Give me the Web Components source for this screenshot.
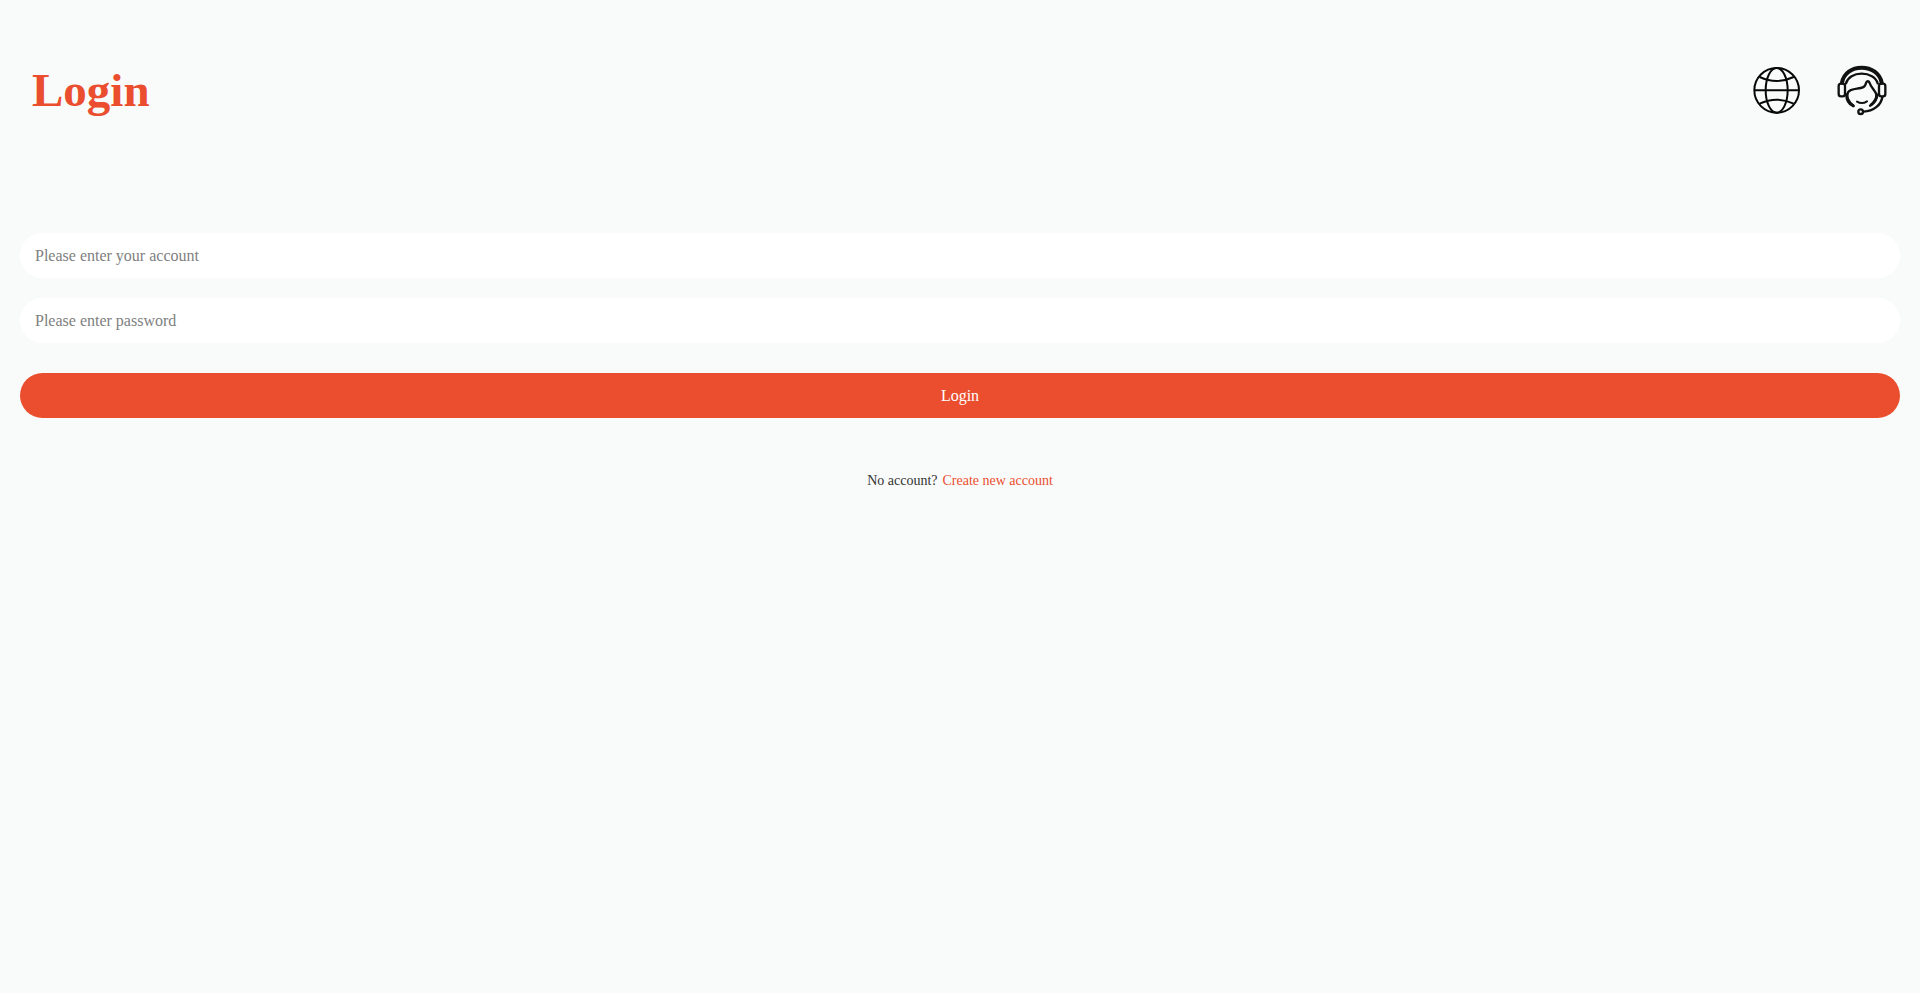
<!DOCTYPE html>
<html lang="en">
<head>
<meta charset="utf-8">
<meta name="viewport" content="width=device-width, initial-scale=1">
<title>Login</title>
<style>
  body { margin: 0; min-height: 100vh; background: #f9fbfa; font-family: "Liberation Serif", "Times New Roman", serif; color: #333; }
</style>
</head>
<body>
<login-page></login-page>
<script>
const define = (name, html) => {
  const template = document.createElement('template');
  template.innerHTML = html;
  customElements.define(name, class extends HTMLElement {
    constructor() {
      super();
      this.attachShadow({ mode: 'open' }).append(template.content.cloneNode(true));
    }
    connectedCallback() {
      const input = this.shadowRoot.querySelector('input');
      if (input) {
        input.type = this.getAttribute('type') || 'text';
        input.placeholder = this.getAttribute('label');
        input.setAttribute('aria-label', this.getAttribute('label'));
      }
      const button = this.shadowRoot.querySelector('button.icon');
      if (button) button.setAttribute('aria-label', this.getAttribute('label'));
    }
  });
};

define('icon-button', `
  <style>
    :host { display: block; }
    button { display: block; padding: 0; border: 0; background: none; cursor: pointer; }
  </style>
  <button class="icon" type="button"><slot></slot></button>`);

define('globe-icon', `
  <style>:host, svg { display: block; } svg { width: 48px; height: 48px; }</style>
  <svg viewBox="0 0 144 144" fill="none" stroke="#080808" stroke-width="6" aria-hidden="true">
    <circle cx="71" cy="73" r="67"/>
    <ellipse cx="71" cy="73" rx="33" ry="67"/>
    <path d="M4 73H138M20 33Q71 57 122 33M20 113Q71 89 122 113"/>
  </svg>`);

define('support-icon', `
  <style>:host, svg { display: block; } svg { width: 52px; height: 52px; }</style>
  <svg viewBox="27 27 156 156" fill="none" stroke="#111" stroke-width="7" stroke-linecap="round" stroke-linejoin="round" aria-hidden="true">
    <path d="M48 83C53 54 78 38 107 38S162 54 167 83" stroke-width="12"/>
    <path d="M60 85C65 67 84 56 107 56S150 67 155 85"/>
    <rect x="38" y="86" width="19" height="38" rx="7"/>
    <rect x="159" y="86" width="19" height="38" rx="7"/>
    <path d="M83 153C66 141 60 123 66 112C72 101 88 102 104 99C115 97 119 91 120 84C122 77 128 77 131 84C135 99 149 107 151 119C153 133 144 145 132 152"/>
    <path d="M62 119C62 134 69 146 81 152M153 119C152 132 145 142 136 149" stroke-width="9"/>
    <path d="M93 140Q108 149 123 139" stroke-width="6"/>
    <path d="M169 126C166 150 142 169 113 170"/>
    <circle cx="104" cy="170" r="7"/>
  </svg>`);

define('page-header', `
  <style>
    :host { display: flex; align-items: center; justify-content: space-between; padding: 0 33px 0 32px; height: 180px; }
    h1 { margin: 0; font-size: 47px; line-height: 54px; color: #ea4e2f; }
    nav { display: flex; align-items: center; gap: 34px; }
  </style>
  <h1><slot></slot></h1>
  <nav aria-label="Options"><slot name="actions"></slot></nav>`);

define('text-field', `
  <style>
    :host { display: block; }
    input { display: block; box-sizing: border-box; width: 100%; height: 45px; padding: 0 15px; border: 0; border-radius: 23px; background: #fff; font: inherit; font-size: 16px; color: #333; }
    input::placeholder { color: #808080; opacity: 1; }
  </style>
  <input>`);

define('submit-button', `
  <style>
    :host { display: block; margin-top: 10px; }
    button { display: block; width: 100%; height: 45px; padding: 0; border: 0; border-radius: 23px; background: #ea4e2f; color: #fff; font: inherit; font-size: 16px; cursor: pointer; }
  </style>
  <button type="submit"><slot></slot></button>`);

define('signup-prompt', `
  <style>
    :host { display: flex; justify-content: center; gap: 5px; margin-top: 55px; font-size: 14px; line-height: 16px; }
    a { color: #ea4e2f; text-decoration: none; }
  </style>
  <span><slot></slot></span><a href="#register"><slot name="link"></slot></a>`);

define('login-page', `
  <style>
    :host { display: block; }
    form { display: flex; flex-direction: column; gap: 20px; padding: 53px 20px 0; }
  </style>
  <page-header>Login
    <icon-button slot="actions" label="Language"><globe-icon></globe-icon></icon-button>
    <icon-button slot="actions" label="Customer service"><support-icon></support-icon></icon-button>
  </page-header>
  <main>
    <form>
      <text-field label="Please enter your account"></text-field>
      <text-field type="password" label="Please enter password"></text-field>
      <submit-button>Login</submit-button>
    </form>
    <signup-prompt>No account?<span slot="link">Create new account</span></signup-prompt>
  </main>`);
</script>
</body>
</html>
